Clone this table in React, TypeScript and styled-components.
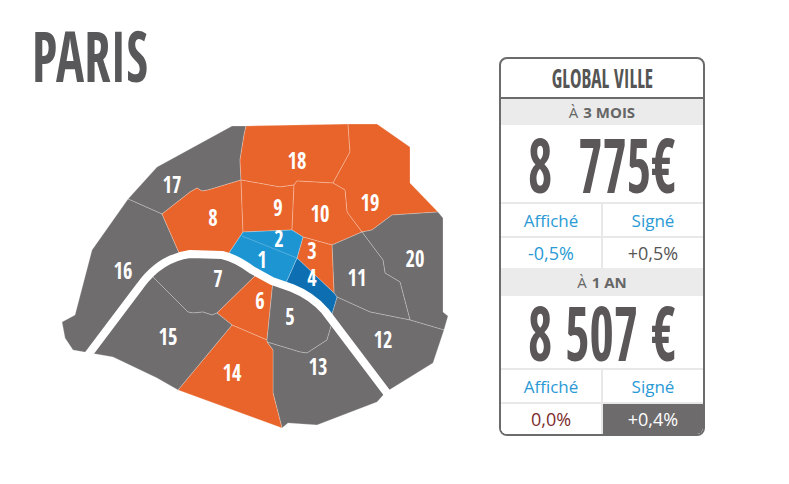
import React from "react";
import styled, { createGlobalStyle } from "styled-components";

const ORANGE = "#e9642a";
const GREY = "#6f6d6e";
const BLUE = "#1d95d2";
const DARK_BLUE = "#0d6eb2";
const CONDENSED = `"Open Sans Condensed", "Roboto Condensed", "Open Sans", sans-serif`;
const SANS = `"Open Sans", "Liberation Sans", sans-serif`;

const GlobalStyle = createGlobalStyle`
  body {
    margin: 0;
    background: #fff;
    font-family: ${SANS};
  }
`;

const Page = styled.div`
  display: flex;
  align-items: flex-start;
  width: 789px;
  height: 484px;
  overflow: hidden;
`;

const MapSection = styled.div`
  width: 499px;
  display: flex;
  flex-direction: column;
`;

// the reference uses a very narrow display face, squeeze the condensed one
const Squeeze = styled.span<{ $sx: number; $origin?: string }>`
  display: inline-block;
  transform: scaleX(${({ $sx }) => $sx});
  transform-origin: ${({ $origin }) => $origin || "center"};
`;

const Title = styled.h1`
  margin: 20px 0 0 32px;
  font-family: ${CONDENSED};
  font-weight: 700;
  font-size: 70px;
  line-height: 70px;
  color: #58585a;
`;

const MapSvg = styled.svg`
  display: block;
  margin-top: 20px;
  width: 470px;
  height: 330px;
`;

const Card = styled.div`
  margin-top: 57px;
  width: 206px;
  box-sizing: border-box;
  border: 2px solid #6b6b6b;
  border-radius: 8px;
  overflow: hidden;
  background: #fff;
`;

const CardHeader = styled.div`
  height: 38px;
  border-bottom: 2px solid #6b6b6b;
  display: flex;
  align-items: center;
  justify-content: center;
  font-family: ${CONDENSED};
  font-weight: 700;
  font-size: 26px;
  color: #555;
`;

const Band = styled.div<{ $tall?: boolean }>`
  height: ${({ $tall }) => ($tall ? "28px" : "26px")};
  background: #ebebeb;
  display: flex;
  align-items: center;
  justify-content: center;
  font-size: 15px;
  color: #666;

  & b {
    font-weight: 700;
    margin-left: 5px;
  }
`;

const BigValue = styled.div<{ $tall?: boolean }>`
  height: ${({ $tall }) => ($tall ? "77px" : "72px")};
  display: flex;
  align-items: center;
  justify-content: center;
  font-family: ${CONDENSED};
  font-weight: 700;
  font-size: 76px;
  line-height: 1;
  color: #5b5758;
  white-space: pre;
`;

const Grid = styled.div`
  display: grid;
  grid-template-columns: 1fr 1fr;
  grid-template-rows: 32px 30px;
  gap: 2px;
  padding-top: 2px;
  background: #e8e8e8;
`;

const Cell = styled.div<{ $tone?: "blue" | "grey" | "red" | "dark"; $value?: boolean }>`
  display: flex;
  align-items: center;
  justify-content: center;
  font-size: ${({ $value }) => ($value ? "18px" : "17px")};
  background: #fff;
  color: #2a9ad6;

  ${({ $tone }) => $tone === "grey" && `
    color: #555;
  `}
  ${({ $tone }) => $tone === "red" && `
    color: #7b2c2c;
  `}
  ${({ $tone }) => $tone === "dark" && `
    color: #fff;
    background: #6d6b6c;
  `}
`;

type Zone = { n: string; fill: string; pts: string; lx: number; ly: number };

const zones: Zone[] = [
  { n: "17", fill: GREY, lx: 172, ly: 184, pts: "128,199 157,167 232,126 246,126 244,135 240,160 241,180 208,190 202,191 197,188 190,192 162,214" },
  { n: "16", fill: GREY, lx: 123, ly: 270, pts: "128,199 162,214 180,255 172,257 158,265 142,283 114,317 90,353 73,350 65,338 62,322 75,315 92,250" },
  { n: "18", fill: ORANGE, lx: 297, ly: 160, pts: "246,126 348,124 350,152 333,183 297,181 294,185 280,187 241,180 240,160 244,135" },
  { n: "19", fill: ORANGE, lx: 370, ly: 202, pts: "348,124 377,124 410,147 410,183 438,212 392,215 372,230 362,232 347,212 345,190 333,183 350,152" },
  { n: "8", fill: ORANGE, lx: 213, ly: 217, pts: "162,214 190,192 197,188 202,191 208,190 241,180 243,232 227,256 222,255 200,254 180,255" },
  { n: "9", fill: ORANGE, lx: 278, ly: 207, pts: "241,180 280,187 294,185 292,230 243,232" },
  { n: "10", fill: ORANGE, lx: 320, ly: 213, pts: "294,185 297,181 333,183 345,190 347,212 362,232 332,245 303,237 292,230" },
  { n: "20", fill: GREY, lx: 415, ly: 258, pts: "438,212 443,218 443,312 448,316 444,330 410,320 400,282 385,273 383,260 362,232 372,230 392,215" },
  { n: "11", fill: GREY, lx: 357, ly: 277, pts: "362,232 383,260 385,273 400,282 410,320 370,312 337,297 334,293 332,245" },
  { n: "12", fill: GREY, lx: 383, ly: 339, pts: "337,297 370,312 410,320 444,330 433,363 386,392 362,360 340,332 331,317" },
  { n: "3", fill: ORANGE, lx: 312, ly: 250, pts: "303,237 332,245 334,293 297,258" },
  { n: "4", fill: DARK_BLUE, lx: 312, ly: 277, pts: "297,258 334,293 337,297 331,317 322,307 305,294 290,287 285,285" },
  { n: "7", fill: GREY, lx: 218, ly: 278, pts: "150,274 158,265 172,257 200,254 222,255 234,260 252,270 258,273 217,313 212,315 203,312 193,313 188,312" },
  { n: "6", fill: ORANGE, lx: 260, ly: 300, pts: "258,273 273,281 267,340 232,325 217,313" },
  { n: "5", fill: GREY, lx: 290, ly: 316, pts: "273,281 290,287 305,294 322,307 332,323 327,340 307,353 300,352 267,342 267,340" },
  { n: "13", fill: GREY, lx: 318, ly: 366, pts: "332,323 340,332 362,360 386,392 377,402 317,425 288,423 282,428 273,393 273,350 267,342 300,352 307,353 327,340" },
  { n: "14", fill: ORANGE, lx: 232, ly: 372, pts: "232,325 267,340 267,342 273,350 273,393 282,428 178,390" },
  { n: "15", fill: GREY, lx: 168, ly: 336, pts: "150,274 188,312 193,313 203,312 212,315 217,313 232,325 178,390 157,378 113,357 90,353 114,317 142,283" },
];

const centre = "243,232 292,230 303,237 297,258 285,285 273,281 252,270 234,260 227,256";

const labels = [
  ...zones.map((z) => ({ n: z.n, x: z.lx, y: z.ly })),
  { n: "2", x: 279, y: 238 },
  { n: "1", x: 262, y: 259 },
];

const ArrondissementMap = () => (
  <MapSvg viewBox="0 110 470 330">
    {zones.map((z) => (
      <polygon key={z.n} points={z.pts} fill={z.fill} stroke="rgba(255,255,255,0.35)" strokeWidth={0.7} strokeLinejoin="round" />
    ))}
    <polygon points={centre} fill={BLUE} stroke="rgba(255,255,255,0.35)" strokeWidth={0.7} />
    <line x1={242} y1={236} x2={297} y2={258} stroke="rgba(255,255,255,0.35)" strokeWidth={0.7} />
    <path
      d="M88,355 L140,286 Q160,258 190,254 L222,255 Q236,258 252,270 L272,281 L292,288 Q312,296 325,311 L387,393"
      fill="none"
      stroke="#fff"
      strokeWidth={8}
      strokeLinejoin="round"
    />
    {labels.map((l) => (
      <text
        key={`l${l.n}`}
        transform={`translate(${l.x} ${l.y + 8.5}) scale(0.85 1)`}
        textAnchor="middle"
        fill="#fff"
        fontFamily={CONDENSED}
        fontWeight={600}
        fontSize={24}
      >
        {l.n}
      </text>
    ))}
  </MapSvg>
);

type Period = {
  label: string;
  bold: string;
  value: string;
  listed: string;
  signed: string;
  listedTone: "blue" | "red";
  signedTone: "grey" | "dark";
  first: boolean;
};

const periods: Period[] = [
  { label: "À", bold: "3 MOIS", value: "8  775€", listed: "-0,5%", signed: "+0,5%", listedTone: "blue", signedTone: "grey", first: true },
  { label: "À", bold: "1 AN", value: "8 507 €", listed: "0,0%", signed: "+0,4%", listedTone: "red", signedTone: "dark", first: false },
];

export default function App() {
  return (
    <>
      <GlobalStyle />
      <Page>
        <MapSection>
          <Title>
            <Squeeze $sx={0.75} $origin="left">PARIS</Squeeze>
          </Title>
          <ArrondissementMap />
        </MapSection>
        <Card>
          <CardHeader>
            <Squeeze $sx={0.74}>GLOBAL VILLE</Squeeze>
          </CardHeader>
          {periods.map((p) => (
            <React.Fragment key={p.bold}>
              <Band $tall={!p.first}>
                {p.label}
                <b>{p.bold}</b>
              </Band>
              <BigValue $tall={p.first}>
                <Squeeze $sx={0.69}>{p.value}</Squeeze>
              </BigValue>
              <Grid>
                <Cell>Affiché</Cell>
                <Cell>Signé</Cell>
                <Cell $value $tone={p.listedTone}>{p.listed}</Cell>
                <Cell $value $tone={p.signedTone}>{p.signed}</Cell>
              </Grid>
            </React.Fragment>
          ))}
        </Card>
      </Page>
    </>
  );
}
